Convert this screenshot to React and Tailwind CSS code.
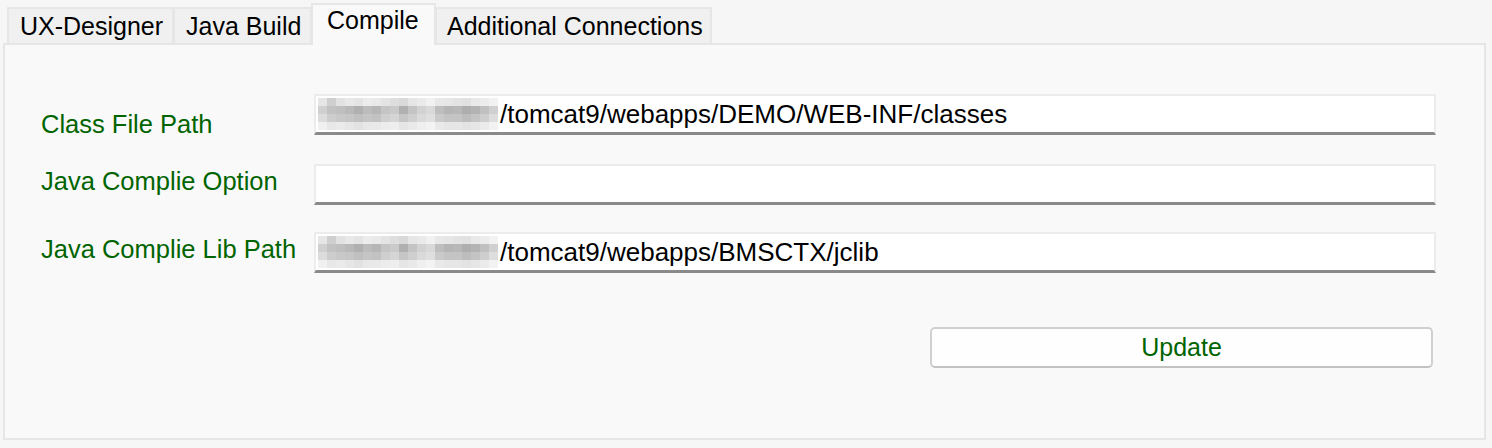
import React from "react";

const font = { fontFamily: '"Liberation Sans", Arial, sans-serif' };

function Tab({ label, active, className = "" }) {
  if (active) {
    return (
      <div
        className={`relative z-10 -mb-[2px] flex h-[42px] items-start border-x-2 border-t-2 border-[#e6e6e6] bg-[#f9f9f9] pt-[3px] text-black ${className}`}
      >
        {label}
      </div>
    );
  }
  return (
    <div
      className={`flex h-[36px] items-center border-2 border-b-0 border-[#e6e6e6] bg-[#f0f0f0] pt-[1px] text-black ${className}`}
    >
      {label}
    </div>
  );
}

const mosaicRows = [
  ["#e6e6e6", "#cfcfcf", "#e2e2e2", "#e8e8e8", "#e4e4e4", "#ececec", "#e9e9e9", "#e4e4e4", "#dedede", "#d9d9d9", "#e6e6e6", "#eaeaea", "#f1f1f1", "#e8e8e8", "#e6e6e6", "#e3e3e3", "#e1e1e1", "#e9e9e9", "#ececec", "#f2f2f2"],
  ["#d0d0d0", "#c2c2c2", "#bfbfbf", "#b9b9b9", "#b0b0b0", "#bcbcbc", "#b6b6b6", "#c5c5c5", "#cacaca", "#b0b0b0", "#c4c4c4", "#d2d2d2", "#d9d9d9", "#bebebe", "#b5b5b5", "#b8b8b8", "#aeaeae", "#b3b3b3", "#c0c0c0", "#d0d0d0"],
  ["#dcdcdc", "#cdcdcd", "#c8c8c8", "#c6c6c6", "#c0c0c0", "#c5c5c5", "#c2c2c2", "#cfcfcf", "#d5d5d5", "#c6c6c6", "#cfcfcf", "#dadada", "#dfdfdf", "#cacaca", "#c4c4c4", "#c4c4c4", "#bdbdbd", "#c4c4c4", "#cecece", "#dddddd"],
  ["#f0f0f0", "#e8e8e8", "#ebebeb", "#e6e6e6", "#e2e2e2", "#e8e8e8", "#e9e9e9", "#ececec", "#eeeeee", "#e6e6e6", "#e9e9e9", "#efefef", "#f3f3f3", "#e9e9e9", "#e6e6e6", "#e6e6e6", "#e3e3e3", "#e6e6e6", "#ebebeb", "#f2f2f2"],
];

function Mosaic() {
  return (
    <svg width="184" height="32" viewBox="0 0 184 32" className="shrink-0">
      {mosaicRows.map((row, r) =>
        row.map((c, i) => (
          <rect key={`${r}-${i}`} x={2 + i * 9} y={r * 8} width="9" height="8" fill={c} />
        ))
      )}
    </svg>
  );
}

function Field({ blurred, value }) {
  return (
    <div className="flex h-[41px] w-[1122px] items-center border-x-2 border-t-2 border-b-[3px] border-x-[#ececec] border-t-[#ececec] border-b-[#8a8a8a] bg-white text-[26px] text-black">
      {blurred && <Mosaic />}
      <span className="whitespace-nowrap">{value}</span>
    </div>
  );
}

export default function App() {
  return (
    <div
      className="h-[448px] w-[1492px] overflow-hidden bg-[#f6f6f6] pl-[3px] pt-[3px] text-[25px] leading-none"
      style={font}
    >
      <div className="flex items-end pl-[4px]">
        <Tab label="UX-Designer" className="w-[167px] pl-[11px]" />
        <Tab label="Java Build" className="-ml-[1px] w-[139px] pl-[11px]" />
        <Tab label="Compile" active className="-ml-[1px] w-[125px] pl-[14px]" />
        <Tab label="Additional Connections" className="-ml-[1px] w-[277px] pl-[10px]" />
      </div>
      <div className="h-[397px] w-[1483px] border-2 border-[#e6e6e6] bg-[#f9f9f9]">
        <div className="flex flex-col pl-[36px] pt-[49px]">
          <div className="flex h-[41px] items-start">
            <div className="w-[273px] whitespace-nowrap pt-[18px] text-[25.5px] text-[#006400]">Class File Path</div>
            <Field blurred value="/tomcat9/webapps/DEMO/WEB-INF/classes" />
          </div>
          <div className="mt-[29px] flex h-[41px] items-start">
            <div className="w-[273px] whitespace-nowrap pt-[5px] text-[25.5px] text-[#006400]">Java Complie Option</div>
            <Field value="" />
          </div>
          <div className="mt-[27px] flex h-[41px] items-start">
            <div className="w-[273px] whitespace-nowrap pt-[5px] text-[25.5px] text-[#006400]">Java Complie Lib Path</div>
            <Field blurred value="/tomcat9/webapps/BMSCTX/jclib" />
          </div>
          <div className="mt-[54px] flex pl-[889px]">
            <button className="flex h-[41px] w-[503px] items-center justify-center rounded-[5px] border-2 border-[#d0d0d0] border-b-[#c2c2c2] bg-[#fefefe] text-[#006400]">
              Update
            </button>
          </div>
        </div>
      </div>
    </div>
  );
}
